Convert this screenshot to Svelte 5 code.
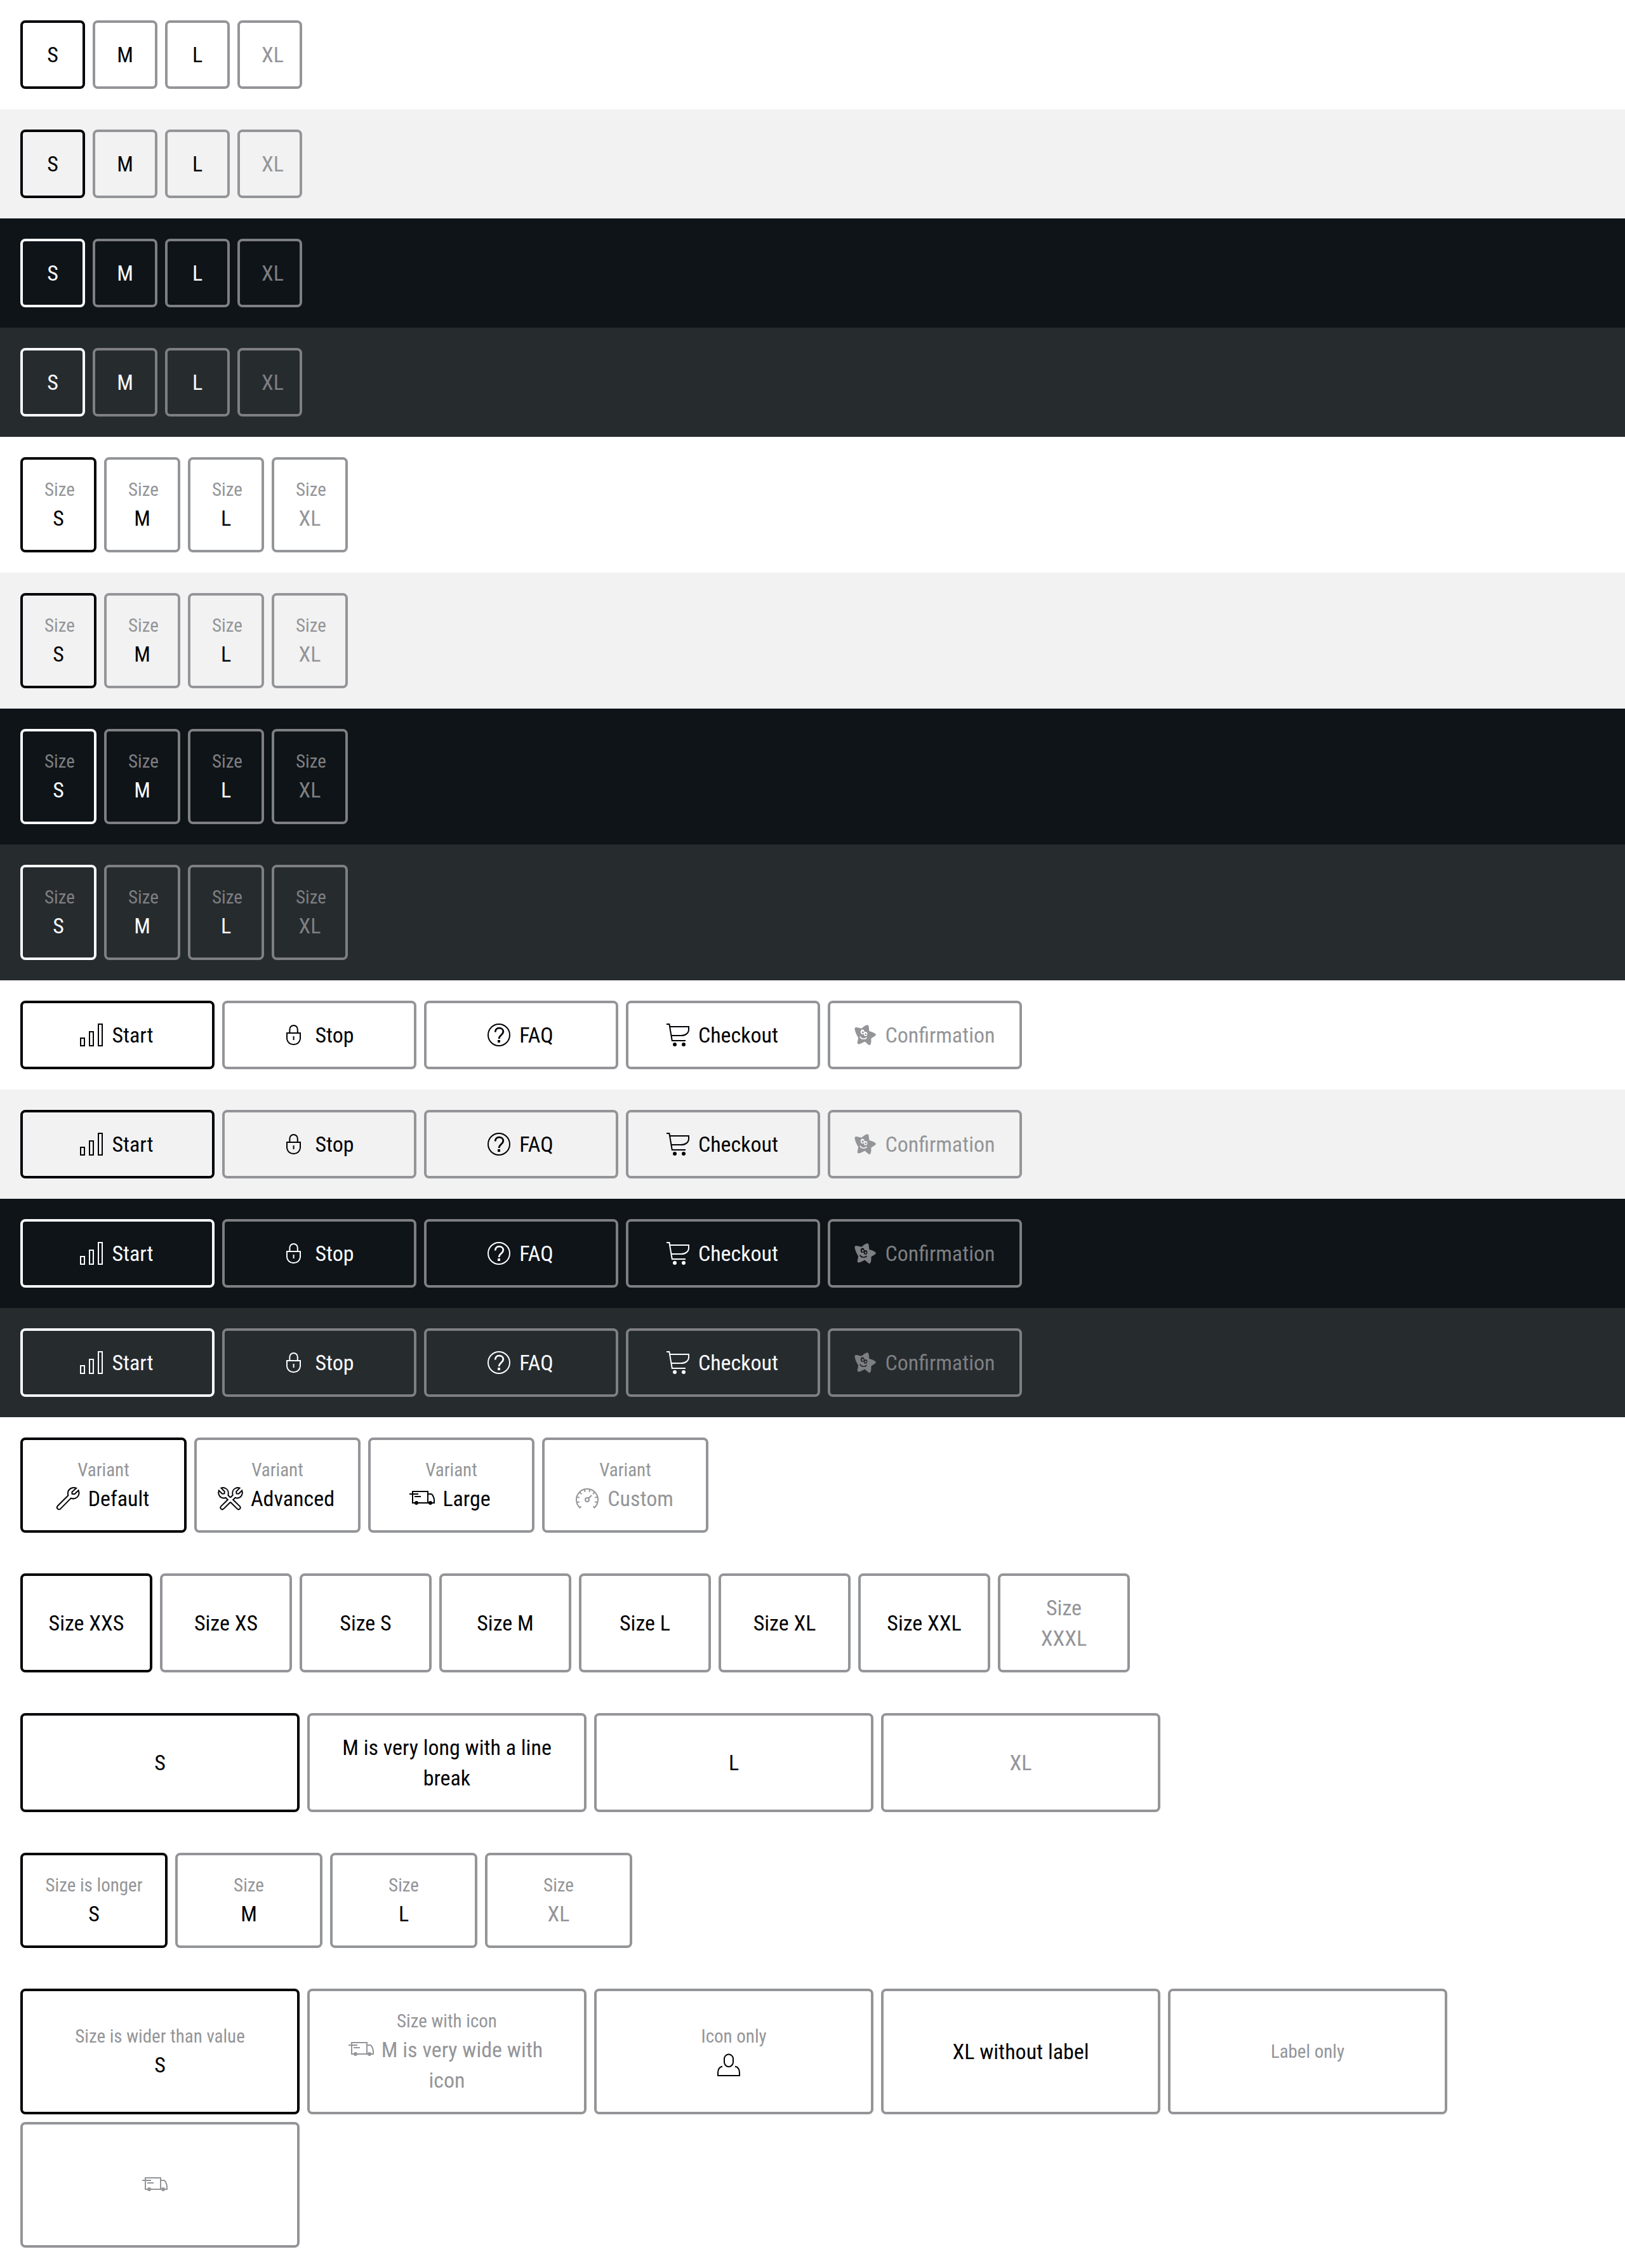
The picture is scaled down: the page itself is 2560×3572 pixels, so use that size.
<script>
  const themes = ['light', 'light surface', 'dark', 'dark surface'];

  const sizes = [{ text: 'S' }, { text: 'M' }, { text: 'L' }, { text: 'XL', disabled: true }];
  const labelled = sizes.map((item) => ({ ...item, label: 'Size' }));

  const steps = [
    { text: 'Start', icon: 'bars' },
    { text: 'Stop', icon: 'lock' },
    { text: 'FAQ', icon: 'question' },
    { text: 'Checkout', icon: 'cart' },
    { text: 'Confirmation', icon: 'star', disabled: true },
  ];

  const variants = [
    { label: 'Variant', text: 'Default', icon: 'wrench' },
    { label: 'Variant', text: 'Advanced', icon: 'wrenches' },
    { label: 'Variant', text: 'Large', icon: 'truck' },
    { label: 'Variant', text: 'Custom', icon: 'gauge', disabled: true },
  ];

  const longSizes = ['XXS', 'XS', 'S', 'M', 'L', 'XL', 'XXL', 'XXXL'].map((s) => ({
    text: `Size ${s}`,
    disabled: s === 'XXXL',
  }));

  const wrapping = [
    { text: 'S' },
    { text: 'M is very long with a line break' },
    { text: 'L' },
    { text: 'XL', disabled: true },
  ];

  const longLabel = labelled.map((item, i) => (i === 0 ? { ...item, label: 'Size is longer' } : item));

  const mixed = [
    { label: 'Size is wider than value', text: 'S' },
    { label: 'Size with icon', text: 'M is very wide with icon', icon: 'truck', disabled: true },
    { label: 'Icon only', icon: 'user' },
    { text: 'XL without label' },
    { label: 'Label only' },
    { icon: 'truck', disabled: true, name: 'Truck' },
  ];

  const groups = [
    ...themes.map((theme) => ({ theme, width: 102, items: sizes })),
    ...themes.map((theme) => ({ theme, width: 120, items: labelled })),
    ...themes.map((theme) => ({ theme, width: 306, items: steps })),
    { theme: 'light', width: 262, items: variants },
    { theme: 'light', width: 208, items: longSizes },
    { theme: 'light', width: 440, items: wrapping },
    { theme: 'light', width: 232, items: longLabel },
    { theme: 'light', width: 440, items: mixed },
  ];

  let selected = $state(groups.map(() => 0));
  const ticks = [-105, -75, -45, -15, 15, 45, 75, 105];
</script>

{#snippet halfWrenches()}
  <path d="M12 11.2 13.8 9.5C13.2 7 14 4.6 16.3 3.8 17.4 3.3 18.5 3.4 19.3 3.8L16.6 6.5 16.8 8.2 18.4 8.4 21.1 5.8C21.9 8 21 10.4 19 11.3 17.8 11.8 16.7 11.8 15.7 11.4L14.1 13 19.4 18.2C20 18.8 20 19.6 19.4 20.2 18.8 20.8 18 20.8 17.4 20.2L12 14.9" />
{/snippet}

{#snippet glyph(name)}
  <svg class="icon" viewBox="0 0 24 24" aria-hidden="true">
    {#if name === 'bars'}
      <path d="M3.5 14.5h3v6h-3zM10.5 9.5h3v11h-3zM17.5 3.5h3v17h-3z" />
    {:else if name === 'lock'}
      <path d="M6 10.5h10.5V15a5 5 0 0 1-5 4.5H11A5 5 0 0 1 6 15zM8.2 10.5V7.6a3.1 3.1 0 0 1 6.2 0v2.9M11.3 13v3" />
    {:else if name === 'question'}
      <circle cx="12" cy="12" r="8.5" />
      <path class="bold" d="M9.1 9.7C9.1 7.8 10.3 6.6 12.2 6.6S15.4 7.7 15.4 9.4C15.4 11.9 12.1 12.1 12.1 15" />
      <path class="solid" d="M11 16h2v2h-2z" />
    {:else if name === 'cart'}
      <path d="M3 3.5h2.2L7.4 16.5H18M5.5 5.5h15V7.6c0 3-2.5 4.9-6 4.9H6.7" />
      <circle class="solid" cx="9.5" cy="19.5" r="1.5" />
      <circle class="solid" cx="16.5" cy="19.5" r="1.5" />
    {:else if name === 'star'}
      <path
        class="solid"
        d="M9.6 6.9C11 5.6 12.6 4.3 14 4.1c.9-.1 1.2.5 1.3 1.4L15.7 9c1.9.5 3.9 1.2 4.9 2.1.6.6.4 1.2-.3 1.6L17.2 14.8c.1 1.7.1 3.3-.5 4.6-.4.8-1.1.8-1.7.2L12.2 17.2c-1.7.9-3.4 1.9-4.8 2-.9.1-1.2-.5-1-1.4L7.1 14.2C5.9 12.4 4.7 9.7 4.3 7.7c-.2-1.2.3-1.9 1.4-1.7z"
      />
      <g class="cutout">
        <ellipse cx="10.4" cy="9.6" rx="1.5" ry="1.9" />
        <ellipse cx="12.8" cy="11.2" rx="1.4" ry="1.7" />
        <path class="smile" d="M8.4 13.2c.7 2 3.6 2.6 5.4.9" />
      </g>
      <circle class="solid" cx="10.6" cy="9.9" r=".8" />
      <circle class="solid" cx="12.9" cy="11.4" r=".7" />
    {:else if name === 'wrench'}
      <path d="M18.6 3.9C16 2.8 13 4 12.1 6.6c-.3 1-.2 2 .1 3L3.9 17.9c-.6.7-.6 1.7 0 2.3s1.6.6 2.2 0l8.3-8.4c1.2.5 2.6.5 3.8-.1 2.4-1.1 3.1-3.7 2.1-6.1l-3.1 3-1.9-.2-.1-1.5z" />
    {:else if name === 'wrenches'}
      {@render halfWrenches()}
      <g transform="matrix(-1 0 0 1 24 0)">{@render halfWrenches()}</g>
    {:else if name === 'truck'}
      <path d="M4.5 6.5h12v9h-12zM2 8.5h7M6 10.5h5M16.5 8.5h2.6c1 0 2.4 3 2.4 5v2h-5" />
      <circle class="solid" cx="7.5" cy="15.5" r="1.5" />
      <circle class="solid" cx="18.5" cy="15.5" r="1.5" />
    {:else if name === 'gauge'}
      <path d="M7.2 18.2l-.9 1.1a8.5 8.5 0 1 1 11.4 0l-.9-1.1M13.1 11.9l2.4-2.4" />
      <circle cx="12" cy="13" r="1.5" />
      {#each ticks as angle}
        <path d="M12 4.5v2.2" transform="rotate({angle} 12 13)" />
      {/each}
    {:else if name === 'user'}
      <path d="M8.5 7.3a3.5 3.5 0 0 1 7 0v2.4a3.5 3.8 0 0 1-7 0zM7 13.2c-2.3.5-3.5 2.3-3.5 5v2.3h17v-2.3c0-2.7-1.2-4.5-3.5-5" />
    {/if}
  </svg>
{/snippet}

<main>
  {#each groups as group, g}
    <section class={group.theme}>
      <div class="group" role="group" aria-label="Options {g + 1}" style="--item: {group.width}px">
        {#each group.items as item, i}
          <button
            type="button"
            aria-pressed={selected[g] === i}
            aria-label={item.name}
            disabled={item.disabled}
            onclick={() => (selected[g] = i)}
          >
            {#if item.label}<span class="label">{item.label}</span>{/if}
            {#if item.text || item.icon}<span class="value">{#if item.icon}{@render glyph(item.icon)}{/if}{item.text ?? ''}</span>{/if}
          </button>
        {/each}
      </div>
    </section>
  {/each}
</main>

<style>
  :global(body) {
    margin: 0;
    background: #fff;
  }

  section {
    --bg: #fff;
    --fg: #010205;
    --muted: #949598;
    padding: 32px;
    background: var(--bg);
  }

  .surface {
    --bg: #f2f2f2;
  }

  .dark {
    --bg: #0e1418;
    --fg: #fbfcff;
    --muted: #7e7f82;
  }

  .dark.surface {
    --bg: #262b2e;
  }

  .group {
    display: grid;
    grid-template-columns: repeat(auto-fill, var(--item));
    grid-auto-rows: 1fr;
    gap: 12px;
  }

  button {
    box-sizing: border-box;
    margin: 0;
    padding: 26px 34px;
    border: 4px solid var(--muted);
    border-radius: 8px;
    background: transparent;
    color: var(--fg);
    font: 400 34px/48px 'Roboto Condensed', Roboto, 'Liberation Sans', sans-serif;
    text-align: center;
    cursor: pointer;
  }

  button[aria-pressed='true'] {
    border-color: var(--fg);
  }

  button:disabled {
    color: var(--muted);
    cursor: not-allowed;
  }

  .label,
  .value {
    display: block;
  }

  .label {
    color: var(--muted);
    font-size: 29px;
    line-height: 42px;
  }

  .icon {
    width: 48px;
    height: 48px;
    margin: 0 8px 0 -8px;
    vertical-align: top;
    fill: none;
    stroke: currentColor;
  }

  .bold {
    stroke-width: 1.4;
  }

  .solid {
    fill: currentColor;
    stroke: none;
  }

  .cutout {
    fill: var(--bg);
    stroke: none;
  }

  .smile {
    fill: none;
    stroke: var(--bg);
    stroke-width: 0.8;
  }
</style>
